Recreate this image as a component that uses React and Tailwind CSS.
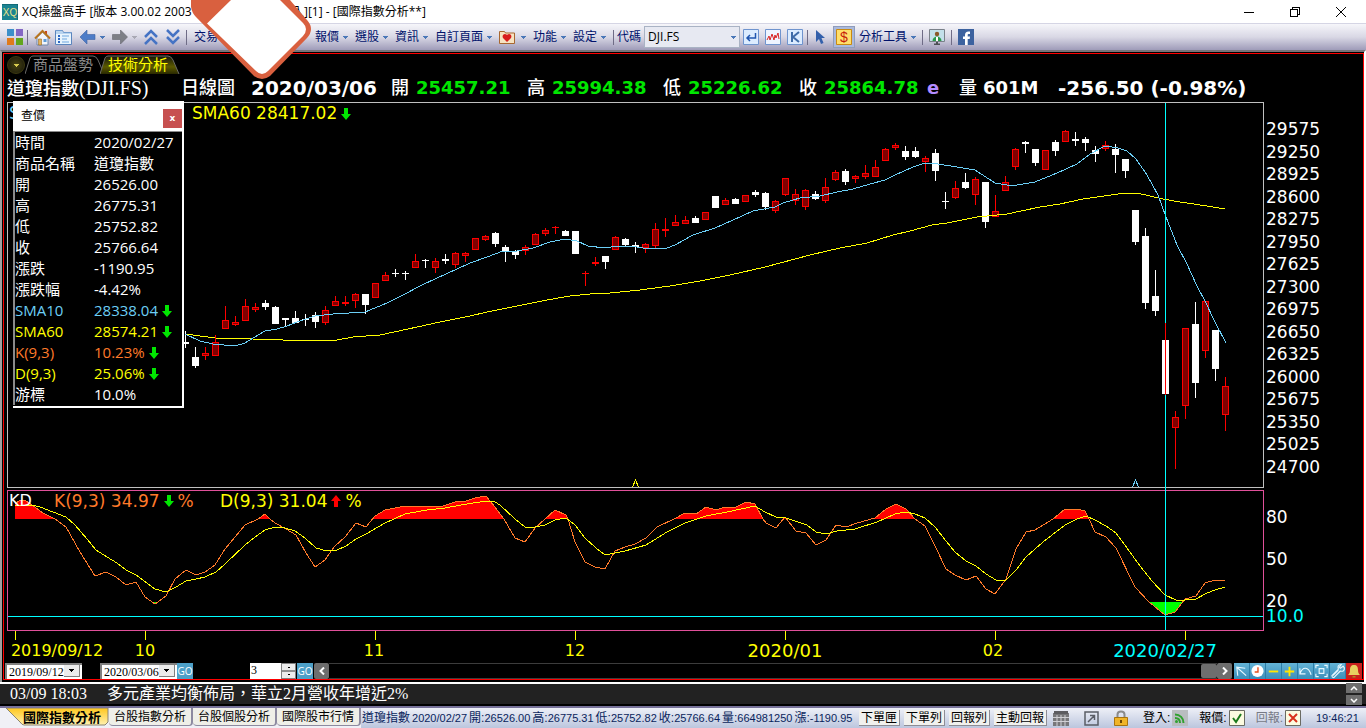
import { useState } from "react";

// [kind, bodyTop, bodyBottom, high, low], one candle every 10 units starting at x = 185
const CANDLES = [
  ["w", 342, 344, 331, 348], ["w", 357, 366, 347, 368], ["r", 353, 356, 347, 360], ["r", 342, 356, 335, 356],
  ["r", 320, 329, 306, 329], ["r", 322, 325, 316, 326], ["r", 306, 321, 299, 321], ["r", 307, 310, 303, 312],
  ["w", 303, 307, 300, 310], ["w", 307, 324, 306, 324], ["w", 318, 320, 318, 327], ["w", 318, 323, 311, 323],
  ["w", 319, 320, 314, 326], ["w", 315, 322, 312, 328], ["r", 310, 323, 306, 325], ["r", 301, 306, 296, 306],
  ["r", 302, 304, 296, 306], ["r", 294, 301, 293, 308], ["w", 294, 305, 294, 314], ["r", 283, 298, 283, 298],
  ["r", 275, 281, 272, 281], ["w", 273, 274, 269, 277], ["w", 273, 274, 271, 280], ["r", 261, 268, 254, 268],
  ["w", 260, 261, 259, 268], ["r", 261, 268, 258, 273], ["w", 259, 261, 254, 264], ["r", 253, 265, 252, 268],
  ["r", 253, 256, 252, 262], ["r", 238, 250, 238, 250], ["r", 236, 240, 235, 241], ["w", 233, 244, 232, 247],
  ["w", 247, 252, 245, 262], ["w", 251, 255, 250, 259], ["r", 247, 251, 245, 255], ["r", 234, 245, 233, 245],
  ["r", 230, 234, 228, 236], ["r", 227, 228, 226, 234], ["w", 231, 236, 230, 236], ["w", 231, 254, 231, 254],
  ["r", 273, 274, 271, 286], ["r", 262, 264, 257, 266], ["w", 256, 262, 256, 269], ["r", 237, 250, 236, 250],
  ["w", 239, 245, 238, 246], ["w", 245, 247, 242, 253], ["r", 244, 248, 243, 253], ["r", 229, 246, 223, 249],
  ["r", 229, 231, 218, 237], ["r", 222, 226, 215, 226], ["r", 220, 224, 216, 224], ["w", 218, 223, 216, 223],
  ["r", 212, 220, 212, 220], ["w", 196, 208, 196, 208], ["r", 200, 205, 198, 205], ["w", 199, 204, 198, 204],
  ["r", 195, 202, 195, 202], ["w", 192, 195, 190, 197], ["w", 193, 207, 192, 210], ["r", 201, 211, 200, 213],
  ["r", 178, 195, 178, 196], ["r", 194, 201, 189, 205], ["r", 190, 207, 189, 210], ["w", 194, 199, 191, 200],
  ["r", 187, 201, 178, 203], ["r", 172, 180, 170, 181], ["w", 171, 182, 169, 185], ["r", 176, 179, 175, 183],
  ["r", 173, 177, 165, 179], ["r", 167, 177, 160, 177], ["r", 149, 161, 148, 161], ["r", 145, 148, 143, 150],
  ["w", 151, 157, 146, 160], ["w", 151, 157, 147, 158], ["r", 158, 162, 156, 172], ["w", 153, 171, 149, 181],
  ["w", 201, 202, 192, 209], ["r", 188, 198, 181, 199], ["w", 182, 188, 173, 189], ["r", 179, 195, 177, 205],
  ["w", 182, 222, 182, 228], ["r", 211, 217, 195, 217], ["r", 182, 191, 176, 191], ["r", 149, 167, 148, 170],
  ["w", 142, 144, 141, 153], ["w", 149, 163, 149, 166], ["r", 150, 170, 150, 170], ["w", 142, 151, 140, 156],
  ["r", 131, 142, 130, 142], ["w", 139, 141, 132, 146], ["w", 139, 143, 137, 151], ["w", 150, 154, 146, 162],
  ["r", 145, 149, 141, 151], ["w", 149, 155, 144, 173], ["w", 159, 171, 159, 178], ["w", 210, 242, 210, 245],
  ["w", 236, 303, 228, 309], ["w", 296, 311, 270, 316], ["w", 340, 394, 323, 395], ["r", 417, 428, 411, 469],
  ["r", 328, 406, 328, 419], ["w", 324, 383, 302, 398], ["r", 301, 351, 301, 358], ["w", 330, 369, 330, 381],
  ["r", 386, 415, 377, 431],
];

const SMA10 =
  "185,334 200,341 213,344 235,346 245,343 253,338 265,331 277,329 287,326 297,322 315,316 333,314 365,312 387,303 403,295 420,286 437,278 457,269 470,263 487,257 503,251 517,251 533,248 550,242 565,239 577,241 588,246 605,248 617,246 630,246 643,248 653,249 667,248 675,245 693,235 715,228 733,220 753,211 775,207 783,203 800,198 820,196 837,192 853,189 870,184 885,180 895,175 913,167 925,163 938,164 957,167 975,170 995,183 1007,185 1017,185 1035,182 1057,173 1077,164 1090,154 1105,146 1118,148 1127,151 1136,159 1147,175 1158,195 1166,217 1177,245 1187,264 1197,286 1205,301 1215,322 1226,343";
const SMA60 =
  "185,334 215,338 253,339 283,340 310,341 337,340 353,337 380,335 408,329 440,322 470,316 487,312 517,306 547,300 570,296 590,294 610,293 640,290 670,286 700,281 730,275 765,267 795,259 810,255 840,248 867,243 893,235 910,231 932,225 947,223 977,217 1007,214 1040,207 1060,204 1083,199 1125,193 1137,193 1163,199 1180,202 1207,206 1225,209";
const K_LINE =
  "15,504 20,500 26,501 32,505 43,513 55,519 66,527 80,552 95,576 106,572 116,577 126,585 136,582 145,597 155,604 166,596 175,579 186,570 196,575 205,572 215,565 225,549 245,525 258,519 265,514 270,519 275,523 286,529 296,535 306,553 315,567 325,560 334,547 345,537 356,523 366,527 375,516 385,510 405,506 443,506 455,502 466,501 475,498 486,496 495,507 504,519 515,538 525,542 535,528 545,519 555,510 566,515 568,519 575,542 585,562 595,567 605,569 615,551 625,547 635,544 646,538 657,527 674,519 685,513 696,514 706,507 716,510 725,507 736,507 746,502 755,504 763,519 766,523 776,528 785,517 796,531 806,533 816,545 826,540 836,525 846,527 857,523 875,518 886,509 896,504 906,509 915,519 925,526 936,548 946,569 955,575 966,580 976,576 986,589 995,594 1006,579 1016,549 1026,532 1035,530 1053,519 1065,509 1077,509 1085,511 1089,519 1095,532 1106,537 1116,548 1135,587 1149,602 1165,615 1175,612 1185,599 1196,596 1205,583 1215,580 1225,581";
const D_LINE =
  "15,506 32,505 40,507 53,512 66,517 75,525 87,539 96,550 107,557 117,563 126,570 136,575 155,589 166,592 176,587 186,581 196,579 205,577 216,572 225,564 245,545 255,537 265,530 275,527 285,528 295,531 305,538 316,548 327,551 337,550 346,546 356,539 366,534 385,523 405,514 427,510 445,508 467,504 486,501 495,502 500,505 515,519 525,527 535,527 545,525 555,520 566,518 575,525 585,538 596,548 605,555 625,551 646,545 667,532 685,523 706,516 727,512 755,506 765,512 776,517 786,518 807,525 816,532 826,534 837,531 855,529 877,522 895,514 906,512 915,514 925,518 935,527 946,541 955,552 966,561 976,566 986,574 996,580 1006,580 1016,570 1026,557 1043,542 1065,525 1077,519 1086,516 1095,520 1106,526 1116,533 1127,548 1140,566 1152,581 1165,595 1176,600 1185,600 1196,599 1207,593 1215,590 1225,587";

const TICKS = [15, 145, 375, 575, 785, 995, 1185];
const MONTHS = [
  [57, "2019/09/12", "text-base text-[#ffff00]"],
  [145, "10", "text-base text-[#ffff00]"],
  [374, "11", "text-base text-[#ffff00]"],
  [575, "12", "text-base text-[#ffff00]"],
  [785, "2020/01", "text-lg text-[#ffff00]"],
  [993, "02", "text-base text-[#ffff00]"],
  [1165, "2020/02/27", "text-lg text-[#00ffff]"],
];
const PRICES = [29575, 29250, 28925, 28600, 28275, 27950, 27625, 27300, 26975, 26650, 26325, 26000, 25675, 25350, 25025, 24700];

const QUOTES = [
  ["開", "25457.21"],
  ["高", "25994.38"],
  ["低", "25226.62"],
  ["收", "25864.78"],
];

const INFO = [
  ["時間", "2020/02/27", "text-white"],
  ["商品名稱", "道瓊指數", "text-white"],
  ["開", "26526.00", "text-white"],
  ["高", "26775.31", "text-white"],
  ["低", "25752.82", "text-white"],
  ["收", "25766.64", "text-white"],
  ["漲跌", "-1190.95", "text-white"],
  ["漲跌幅", "-4.42%", "text-white"],
  ["SMA10", "28338.04", "text-[#6ccff6]", true],
  ["SMA60", "28574.21", "text-[#ffff00]", true],
  ["K(9,3)", "10.23%", "text-[#ff7a2a]", true],
  ["D(9,3)", "25.06%", "text-[#ffff00]", true],
  ["游標", "10.0%", "text-white"],
];

function Arrow({ up, className = "text-[#00e600]" }) {
  return (
    <svg width="10" height="12" viewBox="0 0 10 12" className={`shrink-0 ${className}`} fill="currentColor" aria-hidden="true">
      <path d={up ? "M5 0 10 6H7v6H3V6H0Z" : "M5 12 0 6h3V0h4v6h3Z"} />
    </svg>
  );
}

function Caret({ className = "text-[#4a78b8]" }) {
  return (
    <svg width="5" height="3" viewBox="0 0 5 3" className={`shrink-0 ${className}`} fill="currentColor" shapeRendering="crispEdges" aria-hidden="true">
      <path d="M0 0h5L2.500 3Z" />
    </svg>
  );
}

function Sep() {
  return <span className="h-[15px] w-px shrink-0 bg-[#6f6c86]" />;
}

function Menu({ children }) {
  return (
    <button type="button" className="flex shrink-0 items-center gap-1 whitespace-nowrap">
      {children}
      <Caret />
    </button>
  );
}

function IconButton({ label, children, className = "" }) {
  return (
    <button type="button" aria-label={label} className={`flex shrink-0 items-center justify-center ${className}`}>
      {children}
    </button>
  );
}

function TitleBar() {
  return (
    <header className="flex h-[23px] items-center overflow-hidden bg-white pl-0.5 text-xs whitespace-nowrap">
      <svg width="16" height="16" viewBox="0 0 16 16" className="mr-1 shrink-0">
        <rect width="16" height="16" fill="#1b8391" />
        <path d="M0 0h16v16" fill="none" stroke="#0b5560" />
        <text x="8" y="12" textAnchor="middle" fontSize="10" fontFamily="Liberation Sans, sans-serif" fill="#e6e08a">XQ</text>
      </svg>
      <h1 className="w-[270px] shrink-0 pr-2">XQ操盤高手 [版本 3.00.02 2003</h1>
      <span className="flex-1">入][1] - [國際指數分析**]</span>
      <div className="flex items-center gap-9 pr-5">
        <IconButton label="最小化">
          <svg width="10" height="10" viewBox="0 0 10 10" stroke="#000" shapeRendering="crispEdges"><path d="M0 5.500h10" /></svg>
        </IconButton>
        <IconButton label="還原">
          <svg width="10" height="10" viewBox="0 0 10 10" fill="none" stroke="#000" shapeRendering="crispEdges">
            <path d="M.5 2.500h7v7h-7ZM2.500 2.500v-2h7v7h-2" />
          </svg>
        </IconButton>
        <IconButton label="關閉">
          <svg width="10" height="10" viewBox="0 0 10 10" stroke="#000"><path d="m0 0 10 10M10 0 0 10" /></svg>
        </IconButton>
      </div>
    </header>
  );
}

function Toolbar() {
  return (
    <nav className="flex h-[27px] items-center overflow-hidden border-t border-[#d5d5e4] bg-linear-to-b from-[#f6f6fa] via-[#d9d8e5] to-[#9f9cb9] pl-[7px] text-xs text-[#00126b]">
      <IconButton label="版面" className="mr-1">
        <svg width="16" height="16" viewBox="0 0 16 16">
          <path d="M0 0h7v7H0Z" fill="#3d8fc9" /><path d="M9 0h7v7H9Z" fill="#8467c4" />
          <path d="M0 9h7v7H0Z" fill="#e07a1c" /><path d="M9 9h7v7H9Z" fill="#62a51d" />
        </svg>
      </IconButton>
      <Sep />
      <IconButton label="首頁" className="ml-1.5">
        <svg width="17" height="17" viewBox="0 0 17 17">
          <path d="M11 2h2v4h-2Z" fill="#c8451d" />
          <path d="M3 8.500 8.500 3 14 8.500V16H3Z" fill="#f2f4fa" stroke="#6c84a8" />
          <path d="M1 9.500 8.500 2 16 9.500" fill="none" stroke="#b8741d" strokeWidth="2" />
          <path d="M4.500 10h3v6h-3Z" fill="#e2b25c" stroke="#9a6a1c" strokeWidth=".6" />
          <path d="M9.500 10h3v3h-3Z" fill="#5c9bd8" />
        </svg>
      </IconButton>
      <IconButton label="清單" className="ml-1">
        <svg width="17" height="16" viewBox="0 0 17 16">
          <path d="M.5 1.500h7l1 2h8v12H.5Z" fill="#e8f4fd" stroke="#5a85bd" />
          <path d="M1 4h15M1 2h6" stroke="#8ab4e0" />
          <path d="M3 7h2M3 10h2M3 13h2" stroke="#2b66c4" strokeWidth="2" />
          <path d="M7 7h7M7 10h5M7 13h7" stroke="#6fa7df" />
        </svg>
      </IconButton>
      <IconButton label="上一頁" className="ml-2 gap-1">
        <svg width="16" height="14" viewBox="0 0 16 14"><path d="M0 7 7 0v4.500h8v5H7V14Z" fill="#4d7cc7" stroke="#3c62a3" strokeWidth=".6" /></svg>
        <Caret />
      </IconButton>
      <IconButton label="下一頁" className="ml-1.5 gap-1">
        <svg width="17" height="14" viewBox="0 0 16 14"><path d="M16 7 9 0v4.500H1v5h8V14Z" fill="#7d7f86" stroke="#65676e" strokeWidth=".6" /></svg>
        <Caret className="text-[#a9a9b4]" />
      </IconButton>
      <IconButton label="上移" className="ml-[7px]">
        <svg width="14" height="16" viewBox="0 0 14 16" fill="none" stroke="#4573c4" strokeWidth="2.500"><path d="m1 8 6-6 6 6M1 15l6-6 6 6" /></svg>
      </IconButton>
      <IconButton label="下移" className="ml-2">
        <svg width="14" height="16" viewBox="0 0 14 16" fill="none" stroke="#4573c4" strokeWidth="2.500"><path d="m1 1 6 6 6-6M1 8l6 6 6-6" /></svg>
      </IconButton>
      <span className="w-1.5" />
      <Sep />
      <div className="ml-[7px] w-[121px] shrink-0">
        <Menu>交易</Menu>
      </div>
      <div className="flex items-center gap-[7px]">
        <Menu>報價</Menu>
        <Menu>選股</Menu>
        <Menu>資訊</Menu>
        <Menu>自訂頁面</Menu>
        <Menu>
          <svg width="16" height="14" viewBox="0 0 16 14" className="mr-0.5">
            <path d="M.5 1.500h5l1 1.500h9v10.500H.5Z" fill="#f6e3c2" stroke="#a8672f" />
            <path d="M8 12 4 8c-1-2 0-4 2-4 1 0 2 1 2 1s1-1 2-1c2 0 3 2 2 4Z" fill="#d81c1c" />
          </svg>
        </Menu>
        <Menu>功能</Menu>
        <Menu>設定</Menu>
        <Sep />
      </div>
      <label htmlFor="symbol" className="mx-[3px] shrink-0">代碼</label>
      <div className="relative shrink-0">
        <select id="symbol" className="block h-[22px] w-24 appearance-none border border-[#a9b3c4] bg-[#e7e9f2] pl-[3px] font-[Open_Sans] text-xs text-black">
          <option>DJI.FS</option>
        </select>
        <span className="pointer-events-none absolute inset-y-0 right-1 flex items-center"><Caret /></span>
      </div>
      <div className="mr-1 ml-[3px] flex items-center gap-1.5">
        <IconButton label="送出">
          <svg width="16" height="16" viewBox="0 0 16 16" fill="none">
            <path d="M.5.5h15v15H.5Z" fill="#dcecff" stroke="#6f94ce" /><path d="M12.500 4v5H4M7 6 4 9l3 3" stroke="#2156b0" strokeWidth="1.500" />
          </svg>
        </IconButton>
        <IconButton label="走勢圖">
          <svg width="16" height="16" viewBox="0 0 16 16" fill="none">
            <path d="M.5.5h15v15H.5Z" fill="#eef4ff" stroke="#6f94ce" /><path d="m2 11 2-4 1 4 2-6 2 6 1-5 1 3 2-5 1 6" stroke="#d92525" />
          </svg>
        </IconButton>
        <IconButton label="K線圖">
          <svg width="16" height="16" viewBox="0 0 16 16" fill="none">
            <path d="M.5.5h15v15H.5Z" fill="#dcecff" stroke="#6f94ce" /><path d="M5 3v10M12 3 6 8l6 5" stroke="#3f6ba8" strokeWidth="2" />
          </svg>
        </IconButton>
      </div>
      <Sep />
      <IconButton label="選取" className="mx-[7px]">
        <svg width="11" height="15" viewBox="0 0 11 15"><path d="M1 0v12l3-3 2 5 2.500-1-2-5H10Z" fill="#3360ab" /></svg>
      </IconButton>
      <IconButton label="價格線" className="h-[22px] w-[22px] border border-[#8f9cba] bg-[#aab9dc]">
        <svg width="16" height="16" viewBox="0 0 16 16">
          <path d="M.5.5h15v15H.5Z" fill="#ffdf6b" stroke="#c98a12" />
          <text x="8" y="13" textAnchor="middle" fontSize="14" fontFamily="Liberation Sans, sans-serif" fill="#c6200b">$</text>
        </svg>
      </IconButton>
      <div className="mr-1.5 ml-1 flex gap-2"><Menu>分析工具</Menu></div>
      <Sep />
      <IconButton label="客服" className="mx-1.5">
        <svg width="16" height="16" viewBox="0 0 16 16">
          <path d="M.5.5h15v12H.5Z" fill="#c3e0ea" stroke="#7a8189" /><path d="M5 15.500h6M8 13v2" stroke="#4c4f55" strokeWidth="2" />
          <circle cx="8" cy="5" r="2.200" fill="#8a5a2a" /><path d="M3.500 12c0-6 9-6 9 0Z" fill="#2b9a4c" /><path d="M7 8h2v4H7Z" fill="#fff" />
        </svg>
      </IconButton>
      <Sep />
      <IconButton label="Facebook" className="ml-1.5">
        <svg width="16" height="16" viewBox="0 0 16 16">
          <path d="M0 0h16v16H0Z" fill="#3c629f" /><path d="M7 16v-6H5V7.500h2V6c0-2.300 1.300-3.500 3.500-3.500H12V5h-1.200C10 5 9.700 5.400 9.700 6v1.500H12L11.700 10h-2v6Z" fill="#fff" />
        </svg>
      </IconButton>
    </nav>
  );
}

function PageTabs({ active, onChange }) {
  return (
    <div className="flex h-5 items-end text-[15px]">
      <IconButton label="選單" className="h-[18px] w-[18px] rounded-full border border-[#3d3a10] bg-radial from-[#4a4610] to-[#16150a]">
        <Caret className="text-[#d8cc50]" />
      </IconButton>
      {["商品盤勢", "技術分析"].map((name, i) => (
        <button
          key={name}
          type="button"
          onClick={() => onChange(i)}
          className={`relative h-[19px] w-[75px] shrink-0 whitespace-nowrap ${active === i ? "text-[#ffff00]" : "text-[#8c8c8c]"}`}
        >
          <svg width="82" height="19" viewBox="0 0 82 19" className="absolute top-0 left-0" fill="none">
            <defs>
              <linearGradient id="tabGlow" x2="0" y2="1">
                <stop stopColor="#15150a" />
                <stop offset=".6" stopColor="#5c5a00" />
                <stop offset="1" stopColor="#2a2900" />
              </linearGradient>
            </defs>
            <path d="M0 19 5 3q1-2 3-2h60q3 0 5 4l6 14" fill={active === i ? "url(#tabGlow)" : "#000"} stroke="#6a6a68" />
          </svg>
          <span className="relative block pl-2 text-left leading-[19px]">{name}</span>
        </button>
      ))}
    </div>
  );
}

function QuoteHeader() {
  return (
    <div className="flex h-7 items-center overflow-hidden font-[DejaVu_Sans,Noto_Sans_CJK_TC,sans-serif] text-lg font-bold whitespace-nowrap text-white">
      <h2 className="w-[174px] shrink-0 font-[Liberation_Serif,Noto_Sans_CJK_TC,serif] font-medium">
        道瓊指數<span className="text-xl">(DJI.FS)</span>
      </h2>
      <span className="w-[70px] shrink-0 font-medium">日線圖</span>
      <span className="w-[140px] shrink-0 text-xl">2020/03/06</span>
      {QUOTES.map(([label, value]) => (
        <span key={label} className="flex w-[136px] shrink-0 items-center gap-[7px] last-of-type:w-auto">
          <span className="font-medium">{label}</span>
          <span className="text-[#00e600]">{value}</span>
        </span>
      ))}
      <span className="-ml-2 w-8 shrink-0 text-[#b48cff]">e</span>
      <span className="font-medium">量</span>
      <span className="w-[81px] shrink-0 pl-1.5">601M</span>
      <span className="text-xl">-256.50 (-0.98%)</span>
    </div>
  );
}

function ChartCanvas() {
  return (
    <svg viewBox="7 102 1257 538" className="block w-full" shapeRendering="crispEdges" fill="none">
      <defs>
        <clipPath id="overbought"><rect x="7" y="491" width="1257" height="28" /></clipPath>
        <clipPath id="oversold"><rect x="7" y="602" width="1257" height="28" /></clipPath>
      </defs>
      <rect x="7.500" y="102.500" width="1256" height="385" stroke="#c0c0c0" />
      <rect x="7.500" y="490.500" width="1256" height="140" stroke="#e0509a" />

      {CANDLES.map(([kind, top, bottom, high, low], i) => {
        const x = 185 + i * 10;
        const up = kind === "r";
        return (
          <g key={x}>
            <rect x={x} y={high} width="1" height={low - high} fill={up ? "#ff0000" : "#ffffff"} />
            <rect x={x - 3} y={top} width="7" height={bottom - top} fill={up ? "#ff0000" : "#ffffff"} />
            {up && bottom - top > 2 && <rect x={x - 2} y={top + 1} width="5" height={bottom - top - 2} fill="#800000" />}
          </g>
        );
      })}
      <polyline points={SMA60} stroke="#ffff00" />
      <polyline points={SMA10} stroke="#6ccff6" />
      <path d="M632.500 487 635.500 480l3 7" stroke="#ffff00" />
      <path d="M1132.500 487 1135.500 480l3 7" stroke="#6ccff6" />

      <polygon points={`15,519 ${K_LINE} 1225,519`} fill="#ff0000" clipPath="url(#overbought)" />
      <polygon points={`15,602 ${K_LINE} 1225,602`} fill="#00ff00" clipPath="url(#oversold)" />
      <polyline points={K_LINE} stroke="#ff7a2a" />
      <polyline points={D_LINE} stroke="#ffff00" />

      <path d="M8 616.500h1255M1165.500 103v220M1165.500 395v235" stroke="#00ffff" />
      <path d="M1165.500 323v72" stroke="#ff0000" />
      {TICKS.map((x) => (
        <path key={x} d={`M${x + 0.5} 631v9`} stroke="#ffff00" />
      ))}
    </svg>
  );
}

function InfoWindow({ onClose }) {
  return (
    <section className="absolute -top-px left-1.5 w-[171px] border-r-2 border-b-2 border-white bg-black pb-px">
      <div className="flex h-[30px] items-center justify-between bg-white pl-2 text-xs text-black">
        查價
        <button
          type="button"
          onClick={onClose}
          aria-label="關閉查價"
          className="mt-1 h-[19px] w-[19px] bg-[#c75050] font-[DejaVu_Sans] text-[9px] leading-[18px] font-bold text-white"
        >
          x
        </button>
      </div>
      <table className="w-full border-t border-l-2 border-[#8a8a8a] text-[15px] leading-[21px]">
        <tbody>
          {INFO.map(([label, value, color, falling]) => (
            <tr key={label} className={color}>
              <th scope="row" className="w-20 p-0 text-left font-normal whitespace-nowrap">{label}</th>
              <td className="p-0 whitespace-nowrap">
                <span className="flex items-center gap-1">
                  {value}
                  {falling && <Arrow />}
                </span>
              </td>
            </tr>
          ))}
        </tbody>
      </table>
    </section>
  );
}

function Chart() {
  const [showInfo, setShowInfo] = useState(true);
  return (
    <div className="flex font-[DejaVu_Sans,Noto_Sans_CJK_TC,sans-serif] text-[17px]">
      <div className="relative min-w-0 flex-1">
        <ChartCanvas />
        <div className="absolute top-0 left-0.5 flex leading-[23px] whitespace-nowrap">
          <span className="w-[183px] text-[#6ccff6]">SMA10</span>
          <span className="flex items-center gap-1 text-[#ffff00]">SMA60 28417.02 <Arrow /></span>
        </div>
        <div className="absolute top-[69%] left-0.5 flex pt-px leading-[23px] whitespace-nowrap">
          <span className="w-[45px] text-base text-white">KD</span>
          <span className="flex w-[166px] items-center gap-1 text-[#ff7a2a]">K(9,3) 34.97 <Arrow />%</span>
          <span className="flex items-center gap-1 text-[#ffff00]">D(9,3) 31.04 <Arrow up className="text-[#ff0000]" />%</span>
        </div>
        {showInfo && (
          <div className="font-[Open_Sans,Noto_Sans_CJK_TC,sans-serif]">
            <InfoWindow onClose={() => setShowInfo(false)} />
          </div>
        )}
        <div className="relative h-[22px] leading-[22px]">
          {MONTHS.map(([x, text, style]) => (
            <span key={text} className={`absolute -translate-x-1/2 leading-[22px] ${style}`} style={{ left: `${((x - 7) / 1257) * 100}%` }}>
              {text}
            </span>
          ))}
        </div>
      </div>
      <div className="w-[99px] shrink-0 pt-4 pl-0.5 text-white">
        <div className="flex h-[360px] flex-col justify-between">
          {PRICES.map((p) => (
            <span key={p} className="leading-[22px]">{p}</span>
          ))}
        </div>
        <div className="flex flex-col pt-8 leading-[15px]">
          <span className="pb-[27px]">80</span>
          <span className="pb-[27px]">50</span>
          <span>20</span>
          <span className="text-[#00ffff]">10.0</span>
        </div>
      </div>
    </div>
  );
}

function DateSelect({ label, value }) {
  return (
    <div className="relative h-4 w-[77px] shrink-0">
      <select
        aria-label={label}
        className="block h-4 w-full appearance-none border-t-2 border-l-2 border-[#808080] bg-white pl-0.5 font-[Liberation_Serif] text-xs leading-[14px] text-black"
      >
        <option>{value}</option>
      </select>
      <span className="pointer-events-none absolute top-0.5 right-0.5 flex h-3 w-4 items-center justify-center border-r border-b border-[#808080] bg-[#ececec]">
        <Caret className="text-black" />
      </span>
    </div>
  );
}

const TOOLS = [
  ["縮放", "m4 13-1-9 9 1M3 4l10 9", "#e8f8ff"],
  ["時間", "", ""],
  ["縮小", "M3 8.500h10", "#ffe600"],
  ["放大", "M3 8.500h10M8 3.500v10", "#ffe600"],
  ["復原", "M2 5v6h6M2 11c3-8 9-8 12 1", "#e8f8ff"],
  ["全螢幕", "M5.500 5.500h5v5h-5ZM2 5V2h3M11 2h3v3M14 11v3h-3M5 14H2v-3", "#e8f8ff"],
  ["設定", "m3 13 6-6M14 3l-3 2-1-1 2-3c-3 0-4 2-3 5l-7 7c0 1 1 2 2 2l7-7c3 1 5-1 4-4Z", "#e8f8ff"],
];

function ChartControls() {
  return (
    <div className="flex h-[17px] items-center">
      <DateSelect label="起始日期" value="2019/09/12" />
      <span className="w-[18px] shrink-0" />
      <DateSelect label="結束日期" value="2020/03/06" />
      <button type="button" className="h-4 w-4 shrink-0 bg-[#4da0c8] text-[10px] leading-4 text-white">GO</button>
      <div className="relative ml-[57px] h-4 w-[46px] shrink-0">
        <input aria-label="天數" defaultValue="3" className="block h-4 w-full bg-white pl-px font-[Liberation_Serif] text-xs leading-3 text-black" />
        <span className="pointer-events-none absolute inset-y-0 right-0 flex w-[15px] flex-col justify-between border border-[#808080] bg-[#ececec] py-[3px]">
          <i className="mx-auto h-px w-0.5 bg-black" />
          <i className="h-0.5 bg-[#909090]" />
          <i className="mx-auto h-px w-0.5 bg-black" />
        </span>
      </div>
      <button type="button" className="mr-px ml-px h-4 w-4 shrink-0 bg-[#4da0c8] text-[10px] leading-4 text-white">GO</button>
      <IconButton label="往前" className="h-4 w-[15px] rounded-xs bg-[#6e6e6e]">
        <svg width="6" height="8" viewBox="0 0 6 8" fill="none" stroke="#fff" strokeWidth="2"><path d="M5 .5 1.500 4 5 7.500" /></svg>
      </IconButton>
      <div className="flex h-4 min-w-0 flex-1 justify-end border-y border-[#3c3c3c] bg-black">
        <span className="w-4 rounded-xs bg-[#6e6e6e]" />
      </div>
      <IconButton label="往後" className="mr-0.5 h-4 w-[15px] rounded-xs bg-[#6e6e6e]">
        <svg width="6" height="8" viewBox="0 0 6 8" fill="none" stroke="#fff" strokeWidth="2"><path d="M1 .5 4.500 4 1 7.500" /></svg>
      </IconButton>
      {TOOLS.map(([label, d, color]) => (
        <IconButton key={label} label={label} className="h-4 w-4 border-r border-[#2d7ea8] bg-linear-to-b from-[#63b3d6] to-[#3b8fba]">
          <svg width="15" height="16" viewBox="0 0 16 16" fill="none">
            {d ? (
              <path d={d} stroke={color} strokeWidth={color === "#ffe600" ? 2 : 1.2} />
            ) : (
              <>
                <circle cx="8" cy="8" r="6.500" fill="#fff" />
                <path d="M8.500 4v5H5" stroke="#e8501c" strokeWidth="1.500" />
              </>
            )}
          </svg>
        </IconButton>
      ))}
      <IconButton label="警示" className="mr-px h-4 w-4 bg-[#c8201e]">
        <svg width="14" height="14" viewBox="0 0 14 14">
          <path d="M7 1c3 0 4 2 4 5s1 4 2 5H1c1-1 2-2 2-5s1-5 4-5Z" fill="#e8d060" /><path d="M5.500 12h3v1.500h-3Z" fill="#b08a20" />
        </svg>
      </IconButton>
    </div>
  );
}

function NewsBar() {
  return (
    <div className="flex h-6 items-center border-y-2 border-t-white border-b-black bg-[#222222] pl-2.5 font-[Liberation_Serif,Noto_Sans_CJK_TC,serif] text-base text-white">
      <time className="w-[97px] shrink-0">03/09 18:03</time>
      <p className="min-w-0 flex-1 truncate leading-5">多元產業均衡佈局，華立2月營收年增近2%</p>
      <div className="mr-1 flex w-4 flex-col gap-0.5">
        {["M1 4 4 1l3 3", "m1 1 3 3 3-3"].map((d, i) => (
          <IconButton key={d} label={i ? "下一則" : "上一則"} className="h-2.5 w-4 bg-[#6e6e6e]">
            <svg width="8" height="5" viewBox="0 0 8 5" fill="none" stroke="#fff" strokeWidth="1.500"><path d={d} /></svg>
          </IconButton>
        ))}
      </div>
    </div>
  );
}

const STATUS = [
  ["道瓊指數", "2020/02/27"], ["開:", "26526.00"], ["高:", "26775.31"], ["低:", "25752.82"],
  ["收:", "25766.64"], ["量:", "664981250"], ["漲:", "-1190.95"],
];

function StatusBar() {
  return (
    <footer className="flex h-[22px] items-center overflow-hidden border-t-2 border-[#77729a] bg-linear-to-b from-[#eef0f7] to-[#bcc6de] font-[Liberation_Sans,Noto_Sans_CJK_TC,sans-serif] text-xs whitespace-nowrap text-black">
      <div className="flex h-full shrink-0 items-stretch bg-[#f0f0f6]">
        <button type="button" className="relative w-[109px] pl-[23px] text-left text-[13px] leading-4 font-bold">
          <svg width="103" height="18" viewBox="0 0 103 18" className="absolute top-0 left-1.5">
            <defs>
              <linearGradient id="tabGold" x2="0" y2="1"><stop stopColor="#ffc61c" /><stop offset="1" stopColor="#fff1b0" /></linearGradient>
            </defs>
            <path d="M0 0h102v14l-3 3H18q-2 0-4-3Z" fill="url(#tabGold)" stroke="#8a8470" />
          </svg>
          <span className="relative">國際指數分析</span>
        </button>
        {["台股指數分析", "台股個股分析", "國際股市行情"].map((name) => (
          <button key={name} type="button" className="mb-0.5 w-[84px] rounded-b-sm border-r-2 border-b border-[#8d8aa0] bg-[#efefe8] text-center leading-4">
            {name}
          </button>
        ))}
      </div>
      <div className="flex min-w-0 flex-1 items-center gap-0.5 overflow-hidden pl-px text-[#0a1f5c]">
        {STATUS.map(([label, value]) => (
          <span key={label}>
            {label}
            <span className={label === "道瓊指數" ? "ml-0.5 text-[11px]" : "text-[11px]"}>{value}</span>
          </span>
        ))}
      </div>
      <div className="flex shrink-0 items-center gap-1">
        {["下單匣", "下單列", "回報列", "主動回報"].map((name) => (
          <button key={name} type="button" className="h-4 border-r border-b border-[#8d8d95] bg-[#f1f1ee] px-0.5 leading-4">
            {name}
          </button>
        ))}
      </div>
      <div className="flex shrink-0 items-center gap-[15px] pr-2 pl-1.5">
        <IconButton label="行事曆">
          <svg width="16" height="16" viewBox="0 0 16 16">
            <path d="M0 3h16v13H0Z" fill="#77777a" /><path d="M1 1h14v3H1Z" fill="#5c5c60" />
            <path d="M0 7.500h16M0 11.500h16M4 5v11M8 5v11M12 5v11" stroke="#d0d0d4" />
          </svg>
        </IconButton>
        <IconButton label="開新視窗">
          <svg width="15" height="15" viewBox="0 0 15 15" fill="none" stroke="#5a5d66" strokeWidth="1.500">
            <path d="M1 1h13v13H1ZM4 11l6-6M6 4.500h4.500V9" />
          </svg>
        </IconButton>
        <IconButton label="鎖定">
          <svg width="14" height="16" viewBox="0 0 14 16">
            <path d="M3.500 8V4.500c0-4 7-4 7 0V8" fill="none" stroke="#8b8b8b" strokeWidth="2" />
            <path d="M.5 7.500h13v8H.5Z" fill="#f0b428" stroke="#a87410" /><path d="M6 10h2v3H6Z" fill="#6b4504" />
          </svg>
        </IconButton>
        <span className="flex items-center gap-0.5">
          登入:
          <svg width="16" height="16" viewBox="0 0 16 16" fill="none">
            <path d="M0 0h16v16H0Z" fill="#b9bdc0" /><path d="M3 8c3 0 5 2 5 5M3 4.500c5 0 8.500 3.500 8.500 8.500" stroke="#2fa12f" strokeWidth="2" /><circle cx="4.500" cy="11.500" r="1.500" fill="#2fa12f" />
          </svg>
        </span>
        <span className="-ml-1 flex items-center gap-0.5">
          報價:
          <svg width="16" height="16" viewBox="0 0 16 16" fill="none">
            <path d="M.5.5h15v15H.5Z" fill="#fcfbe0" stroke="#6b6b62" /><path d="m4 8 3 4 5-8" stroke="#1c7a1c" strokeWidth="2" />
          </svg>
        </span>
        <span className="-ml-1 flex items-center gap-0.5 text-[#777a86]">
          回報:
          <svg width="16" height="16" viewBox="0 0 16 16" fill="none">
            <path d="M.5.5h15v15H.5Z" fill="#fcfbe0" stroke="#6b6b62" /><path d="m4 4 8 8M12 4l-8 8" stroke="#d8301c" strokeWidth="2" />
          </svg>
        </span>
        <time className="w-[42px] text-[11px] text-[#0a1f5c]">19:46:21</time>
      </div>
    </footer>
  );
}

export default function App() {
  const [tab, setTab] = useState(1);
  return (
    <div className="relative flex min-h-screen flex-col bg-black font-[Open_Sans,Noto_Sans_CJK_TC,sans-serif]">
      <TitleBar />
      <Toolbar />
      <main className="flex-1 border-t-2 border-r-2 border-l-2 border-t-[#77757a] border-r-white border-l-[#a0a0a0] bg-black pt-px pl-px">
        <div className="border border-[#ff0000]">
          <div className="pl-[3px]">
            <PageTabs active={tab} onChange={setTab} />
            <QuoteHeader />
            <Chart />
          </div>
          <div className="pl-px">
            <ChartControls />
          </div>
        </div>
      </main>
      <NewsBar />
      <StatusBar />
      <svg width="122" height="80" viewBox="191 0 122 80" className="absolute top-0 left-[191px]" aria-hidden="true">
        <path d="M191 0v7q1 6 5 10l58 59q8 6 16 0l37-38q8-9 0-18L290 0Z" fill="#d9603f" />
        <path d="M231 0 207 23.500 256 71q6 6 12 0l35-35q6-7 0-13L280 0Z" fill="#fff" />
      </svg>
    </div>
  );
}
